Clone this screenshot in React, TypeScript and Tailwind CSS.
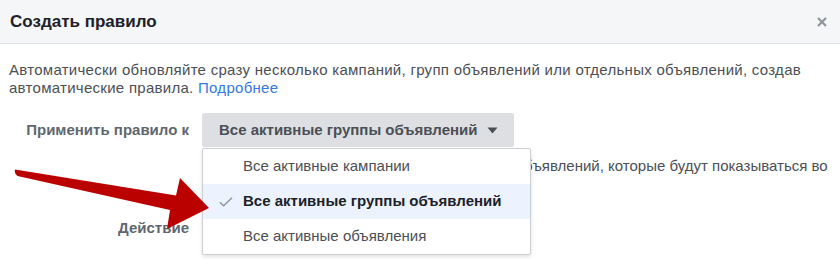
import React from 'react';

const items = [
  { id: 'campaigns', label: 'Все активные кампании' },
  { id: 'adsets', label: 'Все активные группы объявлений' },
  { id: 'ads', label: 'Все активные объявления' },
];

function Caret() {
  return (
    <svg width="11" height="7" viewBox="0 0 11 7" className="ml-[10px]">
      <path d="M0.5 0.5h10L5.5 6.5z" fill="#4b4f56" />
    </svg>
  );
}

function Check() {
  return (
    <svg width="14" height="10" viewBox="0 0 14 10" className="shrink-0">
      <path d="M1 5.2l3.6 3.6L13 0.8" fill="none" stroke="#8d949e" strokeWidth="1.4" />
    </svg>
  );
}

function Arrow() {
  return (
    <svg
      className="pointer-events-none absolute left-0 top-0"
      width="840"
      height="259"
      viewBox="0 0 840 259"
    >
      <path
        d="M15 169.5 Q14 173 17.5 176 L170 210 L167 229 L209 208 L180 178 L176 195.5 Z"
        fill="#bb0000"
      />
    </svg>
  );
}

export default function App() {
  const selected = 'adsets';

  return (
    <div
      className="relative h-[259px] w-[840px] overflow-hidden bg-white text-[15px] text-[#4b4f56]"
      style={{ fontFamily: '"Liberation Sans", Arial, sans-serif' }}
    >
      <div className="flex h-[44px] items-center justify-between border-b border-[#dddfe2] bg-[#f5f6f7] pl-[10px] pr-[13px]">
        <h1 className="text-[17px] font-bold text-[#1d2129]">Создать правило</h1>
        <svg width="10" height="10" viewBox="0 0 10 10">
          <path d="M1 1l8 8M9 1l-8 8" stroke="#90949c" strokeWidth="2.2" />
        </svg>
      </div>

      <div className="px-[9px] pt-[17px]">
        <p className="leading-[18px] tracking-[0.28px]">
          Автоматически обновляйте сразу несколько кампаний, групп объявлений или отдельных объявлений, создав
          автоматические правила. <span className="text-[#3578e5]">Подробнее</span>
        </p>

        <div className="mt-[16px] flex items-center gap-[13px]">
          <div className="w-[180px] text-right font-bold text-[#606770]">Применить правило к</div>
          <div className="flex h-[34px] w-[312px] items-center rounded-[2px] bg-[#dddfe2] pl-[17px] font-bold text-[#4b4f56]">
            Все активные группы объявлений
            <Caret />
          </div>
        </div>

        <div className="ml-[193px] mt-[10px] whitespace-nowrap leading-[18px] text-[#4b4f56]">
          <span className="tracking-[-0.15px]">Правило будет применяться ко всем группам об</span>
          ъявлений, которые будут показываться во
        </div>

        <div className="mt-[42px] flex items-center gap-[13px]">
          <div className="w-[180px] text-right font-bold text-[#606770]">Действие</div>
        </div>
      </div>

      <div className="absolute left-[202px] top-[148px] w-[329px] rounded-[2px] border border-[#ccd0d5] bg-white shadow-[0_2px_4px_rgba(0,0,0,0.12)]">
        {items.map((item) => {
          const active = item.id === selected;
          return (
            <div
              key={item.id}
              className={`flex h-[35px] items-center ${active ? 'bg-[#ecf3ff] font-bold text-[#1d2129]' : 'text-[#4b4f56]'}`}
            >
              <div className="flex w-[40px] justify-end pr-[10px]">{active && <Check />}</div>
              <span>{item.label}</span>
            </div>
          );
        })}
      </div>

      <Arrow />
    </div>
  );
}
